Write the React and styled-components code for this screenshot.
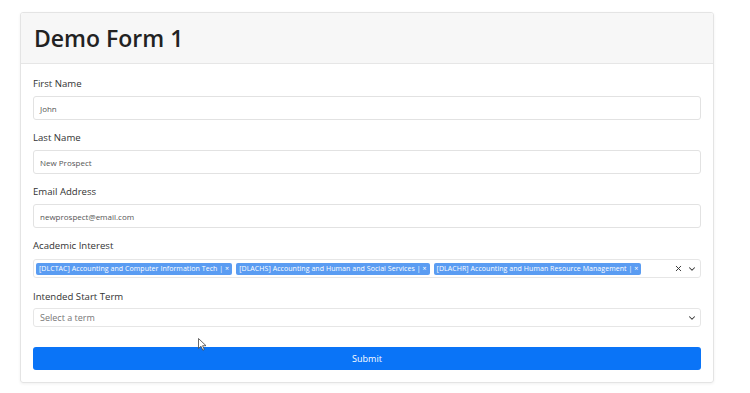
import React from 'react'
import styled, { createGlobalStyle } from 'styled-components'
import { ChevronDown, X } from 'lucide-react'

const GlobalStyle = createGlobalStyle`
  body {
    margin: 0;
    background: #ffffff;
    font-family: "Open Sans", "Noto Sans", sans-serif;
    color: #333;
  }
`

const Page = styled.div`
  padding: 12px 0 0 20px;
  width: 750px;
  height: 393px;
  box-sizing: border-box;
  position: relative;
`

const Card = styled.div`
  width: 694px;
  box-sizing: border-box;
  border: 1px solid #e4e4e4;
  border-radius: 3px;
  box-shadow: 0 1px 3px rgba(0, 0, 0, 0.06);
  overflow: hidden;
`

const CardHeader = styled.div`
  height: 50px;
  background: #f7f7f7;
  border-bottom: 1px solid #e6e6e6;
  display: flex;
  align-items: center;
  padding-left: 13px;
`

const Title = styled.h1`
  margin: 0;
  font-size: 23px;
  font-weight: 600;
  color: #222;
`

const CardBody = styled.form`
  padding: 13px 12px 12px 12px;
  display: flex;
  flex-direction: column;
`

const Field = styled.div`
  display: flex;
  flex-direction: column;
  gap: ${p => p.$gap || 5}px;
  margin-bottom: ${p => p.$after || 11}px;
`

const Label = styled.label`
  font-size: 9.6px;
  line-height: 14px;
  color: #333;
`

const Input = styled.div`
  height: 24px;
  border: 1px solid #e2e2e2;
  border-radius: 3px;
  box-sizing: border-box;
  display: flex;
  align-items: center;
  padding: 0 6px;
  font-size: 8px;
  color: #555;
`

const SelectBox = styled.div`
  height: 19px;
  border: 1px solid #e6e6e6;
  border-radius: 3px;
  box-sizing: border-box;
  display: flex;
  align-items: center;
  padding: 0 3px 0 2px;
  gap: 4px;
`

const Placeholder = styled.span`
  flex: 1;
  font-size: 9px;
  color: #777;
  padding-left: 4px;
`

const Tags = styled.div`
  flex: 1;
  display: flex;
  gap: 4px;
`

const Tag = styled.span`
  background: #5a9cf2;
  color: #fff;
  font-size: 7px;
  letter-spacing: 0.06px;
  line-height: 12px;
  padding: 0 3px;
  border-radius: 2px;
  white-space: nowrap;
`

const Controls = styled.div`
  display: flex;
  align-items: center;
  gap: 4px;
  color: #333;
`

const SubmitButton = styled.button`
  height: 23px;
  background: #0a74f7;
  border: none;
  border-radius: 3px;
  color: #fff;
  font-family: inherit;
  font-size: 9px;
  margin-top: 9px;
`

const Cursor = styled.svg`
  position: absolute;
  left: 198px;
  top: 338px;
`

const interests = [
  '[DLCTAC] Accounting and Computer Information Tech',
  '[DLACHS] Accounting and Human and Social Services',
  '[DLACHR] Accounting and Human Resource Management',
]

export default function App() {
  return (
    <Page>
      <GlobalStyle />
      <Card>
        <CardHeader>
          <Title>Demo Form 1</Title>
        </CardHeader>
        <CardBody>
          <Field>
            <Label>First Name</Label>
            <Input>John</Input>
          </Field>
          <Field>
            <Label>Last Name</Label>
            <Input>New Prospect</Input>
          </Field>
          <Field>
            <Label>Email Address</Label>
            <Input>newprospect@email.com</Input>
          </Field>
          <Field $gap={6} $after={12}>
            <Label>Academic Interest</Label>
            <SelectBox>
              <Tags>
                {interests.map(t => (
                  <Tag key={t}>{t} | ×</Tag>
                ))}
              </Tags>
              <Controls>
                <X size={9} strokeWidth={2.5} />
                <ChevronDown size={10} strokeWidth={2.5} />
              </Controls>
            </SelectBox>
          </Field>
          <Field $gap={4} $after={11}>
            <Label>Intended Start Term</Label>
            <SelectBox>
              <Placeholder>Select a term</Placeholder>
              <Controls>
                <ChevronDown size={10} strokeWidth={2.5} />
              </Controls>
            </SelectBox>
          </Field>
          <SubmitButton type="button">Submit</SubmitButton>
        </CardBody>
      </Card>
      <Cursor width="9" height="13" viewBox="0 0 9 13">
        <path d="M0.5 0.5 L0.5 10.5 L3 8.2 L4.8 12.2 L6.3 11.5 L4.6 7.7 L8 7.7 Z" fill="#fff" stroke="#444" strokeWidth="0.8" />
      </Cursor>
    </Page>
  )
}
